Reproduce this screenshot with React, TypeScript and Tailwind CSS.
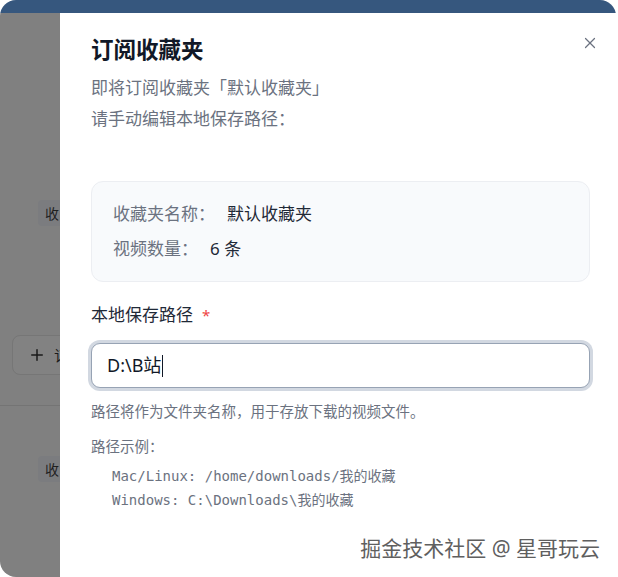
import { X, Plus } from "lucide-react";

const SANS = "font-['Noto_Sans','Noto_Sans_CJK_SC',sans-serif]";
const MONO = "font-['DejaVu_Sans_Mono','Noto_Sans_CJK_SC',monospace]";

function BackdropPage() {
  // dimmed list page behind the drawer
  return (
    <div className="flex h-full flex-col">
      <div className="h-[13px] shrink-0 bg-[#36577e]" />
      <div className="flex flex-1 flex-col bg-[#808080]">
        <div className="mt-[187px] ml-[38px] flex h-[26px] w-[30px] items-center rounded bg-[#7b7c7f] pl-[7px] text-[14px] text-[#1f1f1f]">
          收
        </div>
        <div className="mt-[109px] ml-[12px] flex h-[40px] w-[80px] items-center gap-[8px] rounded-lg border border-[#767676] bg-[#828282] pl-[15px] text-[15px] text-[#1a1a1a]">
          <Plus className="size-[18px]" strokeWidth={2} />
          <span>订阅</span>
        </div>
        <div className="mt-[30px] h-px bg-[#747474]" />
        <div className="mt-[50px] ml-[38px] flex h-[26px] w-[30px] items-center rounded bg-[#7b7c7f] pl-[7px] text-[14px] text-[#1f1f1f]">
          收
        </div>
      </div>
    </div>
  );
}

function InfoRow({ label, value }: { label: string; value: string }) {
  return (
    <div className="flex items-center text-[17px] leading-[26px]">
      <span className="text-[#6b7280]">{label}</span>
      <span className="ml-[12px] text-[#1f2937]">{value}</span>
    </div>
  );
}

export default function App() {
  return (
    <div className={`relative h-[577px] w-[618px] overflow-hidden bg-white ${SANS}`}>
      <div className="h-full w-[616px] overflow-hidden rounded-2xl">
        <BackdropPage />
      </div>

      <div className="absolute top-[13px] right-0 bottom-0 left-[60px] bg-white px-[31px] pt-[22px]">
        <button className="absolute top-[21px] right-[19px] text-[#6b7280]">
          <X className="size-[18px]" strokeWidth={1.6} />
        </button>

        <h2 className="text-[22.5px] leading-[30px] font-bold text-[#111827]">订阅收藏夹</h2>
        <p className="mt-[7px] text-[17px] leading-[31px] text-[#6b7280]">即将订阅收藏夹「默认收藏夹」</p>
        <p className="text-[17px] leading-[31px] text-[#6b7280]">请手动编辑本地保存路径：</p>

        <div className="mt-[47px] flex w-[499px] flex-col gap-[9px] rounded-xl border border-[#eceef2] bg-[#f8fafc] px-[21px] py-[19px]">
          <InfoRow label="收藏夹名称：" value="默认收藏夹" />
          <InfoRow label="视频数量：" value="6 条" />
        </div>

        <div className="mt-[21px] flex items-center text-[17px] leading-[24px] text-[#1f2937]">
          本地保存路径
          <span className="ml-[9px] text-[15px] text-[#ef4444]">*</span>
        </div>

        <div className="mt-[16px] flex h-[45px] w-[499px] items-center rounded-[9px] border border-[#97a3b4] bg-white px-[15px] shadow-[0_0_0_3px_#d2d8e1]">
          <span className="text-[18px] text-[#111827]">D:\B站</span>
          <span className="ml-[1px] h-[22px] w-px bg-[#111827]" />
        </div>

        <p className="mt-[13px] text-[14.5px] leading-[20px] text-[#6b7280]">
          路径将作为文件夹名称，用于存放下载的视频文件。
        </p>
        <p className="mt-[15px] text-[14.5px] leading-[20px] text-[#6b7280]">路径示例：</p>
        <div className={`mt-[8px] pl-[21px] text-[14px] leading-[24px] text-[#6b7280] ${MONO}`}>
          <div>Mac/Linux: /home/downloads/我的收藏</div>
          <div>Windows: C:\Downloads\我的收藏</div>
        </div>
      </div>

      <div className="absolute right-[18px] bottom-[16px] text-[21px] leading-[26px] text-[#5f5f5f] [text-shadow:0_0_2px_#fff,0_0_2px_#fff]">
        掘金技术社区 @ 星哥玩云
      </div>
    </div>
  );
}
